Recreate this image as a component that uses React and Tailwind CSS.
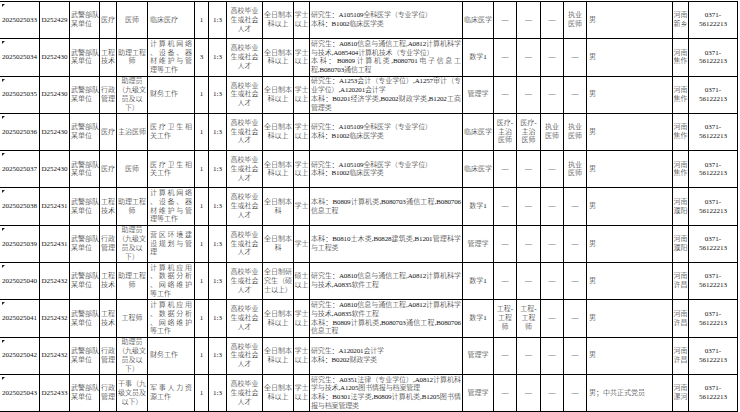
import React from "react";

const D = "—";
const SRC = ["高校毕业", "生或社会", "人才"];
const EDU1 = ["全日制本", "科以上"];
const EDU2 = ["全日制本", "科"];
const DEG1 = ["学士", "以上"];
const UNIT = ["武警部队", "某单位"];
const PHONE = ["0371-", "56122213"];
const ZY = ["执业", "医师"];

const rows = [
  {
    id: "2025025033", code: "D252429", cat: ["医疗"], pos: ["医师"], duty: ["临床医疗"], n: "1",
    edu: EDU1, deg: DEG1,
    major: ["研究生：A105109全科医学（专业学位）", "本科：B1002临床医学类"],
    exam: ["临床医学"], c: [[D], [D], [D], ZY], other: "男", loc: ["河南", "新乡"],
  },
  {
    id: "2025025034", code: "D252430", cat: ["工程", "技术"], pos: ["助理工程", "师"],
    duty: ["|计算机网络", "|、设备、器", "|材维护与管", "理等工作"], n: "3",
    edu: EDU1, deg: DEG1,
    major: [
      "|研究生：A0810信息与通信工程,A0812计算机科学",
      "与技术,A085404计算机技术（专业学位）",
      "|本科：B0809计算机类,B080701电子信息工",
      "程,B080703通信工程",
    ],
    exam: ["数学1"], c: [[D], [D], [D], [D]], other: "男", loc: ["河南", "焦作"],
  },
  {
    id: "2025025035", code: "D252430", cat: ["行政", "管理"], pos: ["助理员", "（九级文", "员及以", "下）"],
    duty: ["财务工作"], n: "1", edu: EDU1, deg: DEG1,
    major: [
      "|研究生：A1253会计（专业学位）,A1257审计（专",
      "业学位）,A120201会计学",
      "|本科：B0201经济学类,B0202财政学类,B1202工商",
      "管理类",
    ],
    exam: ["管理学"], c: [[D], [D], [D], [D]], other: "男", loc: ["河南", "焦作"],
  },
  {
    id: "2025025036", code: "D252430", cat: ["医疗"], pos: ["主治医师"],
    duty: ["|医疗卫生相", "关工作"], n: "1", edu: EDU1, deg: DEG1,
    major: ["研究生：A105109全科医学（专业学位）", "本科：B1002临床医学类"],
    exam: ["临床医学"], c: [["医疗-", "主治", "医师"], ["医疗-", "主治", "医师"], ZY, ZY], other: "男", loc: ["河南", "焦作"],
  },
  {
    id: "2025025037", code: "D252430", cat: ["医疗"], pos: ["医师"],
    duty: ["|医疗卫生相", "关工作"], n: "1", edu: EDU1, deg: DEG1,
    major: ["研究生：A105109全科医学（专业学位）", "本科：B1002临床医学类"],
    exam: ["临床医学"], c: [[D], [D], [D], ZY], other: "男", loc: ["河南", "焦作"],
  },
  {
    id: "2025025038", code: "D252431", cat: ["工程", "技术"], pos: ["助理工程", "师"],
    duty: ["|计算机网络", "|、设备、器", "|材维护与管", "理等工作"], n: "1",
    edu: EDU2, deg: ["学士"],
    major: ["|本科：B0809计算机类,B080703通信工程,B080706", "信息工程"],
    exam: ["数学1"], c: [[D], [D], [D], [D]], other: "男", loc: ["河南", "濮阳"],
  },
  {
    id: "2025025039", code: "D252431", cat: ["行政", "管理"], pos: ["助理员", "（九级文", "员及以", "下）"],
    duty: ["|营区环境建", "|设规划与管", "理"], n: "1", edu: EDU2, deg: ["学士"],
    major: ["|本科：B0810土木类,B0828建筑类,B1201管理科学", "与工程类"],
    exam: ["管理学"], c: [[D], [D], [D], [D]], other: "男", loc: ["河南", "濮阳"],
  },
  {
    id: "2025025040", code: "D252432", cat: ["工程", "技术"], pos: ["助理工程", "师"],
    duty: ["|计算机应用", "|、数据分析", "|、网络维护", "等工作"], n: "1",
    edu: ["全日制研", "究生（硕", "士以上）"], deg: ["硕士", "以上"],
    major: ["|研究生：A0810信息与通信工程,A0812计算机科学", "与技术,A0835软件工程"],
    exam: ["数学1"], c: [[D], [D], [D], [D]], other: "男", loc: ["河南", "许昌"],
  },
  {
    id: "2025025041", code: "D252432", cat: ["工程", "技术"], pos: ["工程师"],
    duty: ["|计算机应用", "|、数据分析", "|、网络维护", "等工作"], n: "1",
    edu: EDU1, deg: DEG1,
    major: [
      "|研究生：A0810信息与通信工程,A0812计算机科学",
      "与技术,A0835软件工程",
      "|本科：B0809计算机类,B080703通信工程,B080706",
      "信息工程",
    ],
    exam: ["数学1"], c: [["工程-", "工程", "师"], ["工程-", "工程", "师"], [D], [D]], other: "男", loc: ["河南", "许昌"],
  },
  {
    id: "2025025042", code: "D252432", cat: ["行政", "管理"], pos: ["助理员", "（九级文", "员及以", "下）"],
    duty: ["财务工作"], n: "1", edu: EDU1, deg: DEG1,
    major: ["研究生：A120201会计学", "本科：B0202财政学类"],
    exam: ["管理学"], c: [[D], [D], [D], [D]], other: "男", loc: ["河南", "许昌"],
  },
  {
    id: "2025025043", code: "D252433", cat: ["行政", "管理"], pos: ["干事（九", "级文员及", "以下）"],
    duty: ["|军事人力资", "源工作"], n: "1", edu: EDU1, deg: DEG1,
    major: [
      "|研究生：A0351法律（专业学位）,A0812计算机科",
      "学与技术,A1205图书情报与档案管理",
      "|本科：B0301法学类,B0809计算机类,B1205图书情",
      "报与档案管理类",
    ],
    exam: ["管理学"], c: [[D], [D], [D], [D]], other: "男；中共正式党员", loc: ["河南", "漯河"],
  },
];

const cellBase =
  "relative flex items-center border-r border-b border-black overflow-hidden";

function tokens(s) {
  return s.match(/[\u3000-\u303f\u4e00-\u9fff\uff00-\uffef]|[^\u3000-\u303f\u4e00-\u9fff\uff00-\uffef]+/g) || [];
}

function Line({ text }) {
  if (text.startsWith("|")) {
    const t = tokens(text.slice(1));
    return (
      <div className="flex justify-between whitespace-nowrap">
        {t.map((x, i) => (
          <span key={i}>{x}</span>
        ))}
      </div>
    );
  }
  return <div className="whitespace-nowrap">{text}</div>;
}

function C({ lines, mark }) {
  return (
    <div className={cellBase + " justify-center text-center"}>
      {mark && (
        <span className="absolute top-[2px] left-[2px] w-0 h-0 border-t-[3px] border-t-[#222] border-r-[3px] border-r-transparent" />
      )}
      <div>
        {lines.map((l, i) => (
          <div key={i} className="whitespace-nowrap">
            {l}
          </div>
        ))}
      </div>
    </div>
  );
}

function L({ lines, pad = "pl-[2px] pr-[2px]" }) {
  return (
    <div className={cellBase + " " + pad}>
      <div className="w-full">
        {lines.map((l, i) => (
          <Line key={i} text={l} />
        ))}
      </div>
    </div>
  );
}

export default function App() {
  return (
    <div className="w-[740px] h-[412px] overflow-hidden bg-white text-[#111] font-light font-['Liberation_Serif','Noto_Sans_CJK_SC',serif] text-[7px] leading-[8.8px]">
      <div className="mt-px w-[738px] border-t border-black grid grid-cols-[40px_30px_30px_17px_31px_47px_14px_18px_36px_31px_16px_153px_31px_23px_24px_23px_23px_86px_16px_49px] auto-rows-[37.3px]">
        {rows.map((r) => (
          <React.Fragment key={r.id}>
            <C lines={[r.id]} mark />
            <C lines={[r.code]} />
            <L lines={UNIT} pad="pl-[1px]" />
            <C lines={r.cat} />
            <C lines={r.pos} />
            <L lines={r.duty} />
            <C lines={[r.n]} />
            <C lines={["1:3"]} />
            <C lines={SRC} />
            <C lines={r.edu} />
            <C lines={r.deg} />
            <div className="contents tracking-[-0.15px]">
              <L lines={r.major} pad="pl-[1px] pr-[1px] tracking-[-0.15px]" />
            </div>
            <C lines={r.exam} />
            {r.c.map((x, i) => (
              <C key={i} lines={x} />
            ))}
            <L lines={[r.other]} />
            <C lines={r.loc} />
            <C lines={PHONE} />
          </React.Fragment>
        ))}
      </div>
    </div>
  );
}
